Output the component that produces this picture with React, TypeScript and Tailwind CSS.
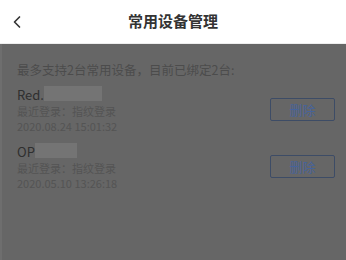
import { ChevronLeft } from "lucide-react";

interface Device {
  name: string;
  blurW: string;
  login: string;
  time: string;
}

const devices: Device[] = [
  { name: "Red.", blurW: "w-[58px]", login: "最近登录：指纹登录", time: "2020.08.24 15:01:32" },
  { name: "OP", blurW: "w-[42px]", login: "最近登录：指纹登录", time: "2020.05.10 13:26:18" },
];

function DeviceRow({ d }: { d: Device }) {
  return (
    <div className="flex items-center justify-between pr-[11px]">
      <div className="flex flex-col">
        <div className="flex items-center">
          <span className="text-[13px] text-[#2f2f2f] leading-[19px]">{d.name}</span>
          <span className={`${d.blurW} h-[15px] bg-[#747474] -mt-[3px]`} />
        </div>
        <span className="text-[11px] text-[#545454] leading-[15px]">{d.login}</span>
        <span className="text-[11px] text-[#545454] leading-[15px]">{d.time}</span>
      </div>
      <button className="w-[65px] h-[23px] border border-[#3d4c66] rounded-[2px] text-[13px] text-[#46639a] flex items-center justify-center">
        删除
      </button>
    </div>
  );
}

export default function App() {
  return (
    <div
      className="w-[346px] h-[260px] flex flex-col bg-[#666666] overflow-hidden"
      style={{ fontFamily: '"Noto Sans CJK SC", "Noto Sans", sans-serif' }}
    >
      <div className="h-[44px] bg-white flex items-center relative shrink-0 border-b border-[#eeeeee]">
        <ChevronLeft className="w-[20px] h-[20px] text-[#333] ml-[7px]" strokeWidth={2} />
        <span className="absolute left-0 right-0 text-center text-[15px] font-bold text-[#333]">
          常用设备管理
        </span>
      </div>
      <div className="flex-1 flex flex-col pl-[15px] border-l-2 border-[#6e6e6e]">
        <div className="text-[12.5px] text-[#4c4c4c] mt-[18px] leading-[16px]">
          最多支持2台常用设备，目前已绑定2台:
        </div>
        <div className="mt-[7px] flex flex-col gap-[8px]">
          {devices.map((d) => (
            <DeviceRow key={d.time} d={d} />
          ))}
        </div>
      </div>
    </div>
  );
}
